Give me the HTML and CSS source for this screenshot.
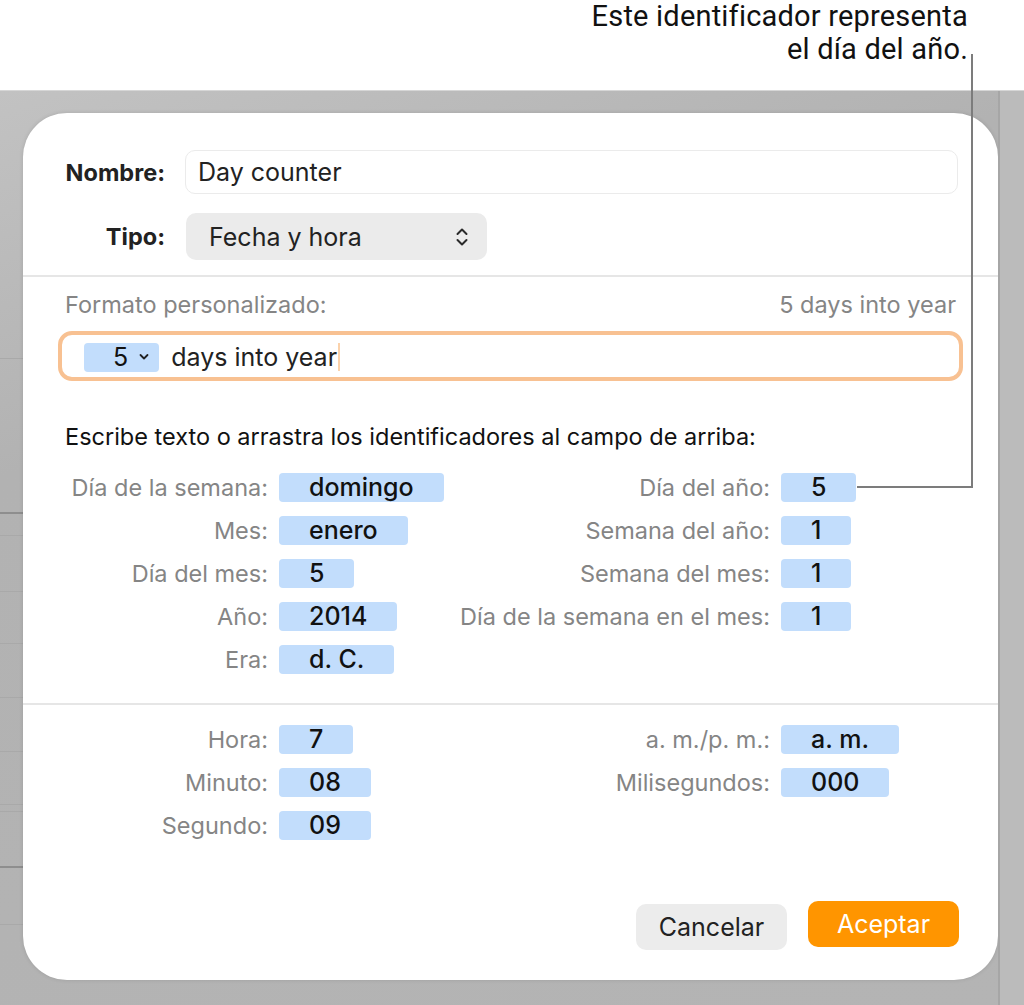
FILE: index.html
```html
<!DOCTYPE html>
<html lang="es">
<head>
    <meta charset="UTF-8">
    <meta name="viewport" content="width=device-width, initial-scale=1.0">
    <title>Formato personalizado</title>
    <link rel="stylesheet" href="styles.css">
</head>
<body>
    <!-- Callout above the window -->
    <div class="callout">
        <p>Este identificador representa</p>
        <p>el día del año.</p>
    </div>
    <div class="leader"></div>

    <div class="backdrop">
        <div class="sheet">
            <div class="sheet-row" style="height: 268px"></div>
            <div class="sheet-row dark" style="height: 155px"></div>
            <div class="sheet-row" style="height: 22px"></div>
            <div class="sheet-row" style="height: 56px"></div>
            <div class="sheet-row" style="height: 52px"></div>
            <div class="sheet-row" style="height: 54px"></div>
            <div class="sheet-row" style="height: 54px"></div>
            <div class="sheet-row" style="height: 53px"></div>
            <div class="sheet-row" style="height: 7px"></div>
            <div class="sheet-row dark" style="height: 56px"></div>
            <div class="sheet-row" style="height: 57px"></div>
        </div>

        <div class="dialog">
            <!-- Name and type -->
            <div class="head">
                <label class="head-label">Nombre:</label>
                <div class="name-field">Day counter</div>
                <label class="head-label">Tipo:</label>
                <div class="popup">
                    <span>Fecha y hora</span>
                    <svg class="updown" width="16" height="22" viewBox="0 0 16 22">
                        <path d="M3.5 8 L8 3.5 L12.5 8 M3.5 14 L8 18.5 L12.5 14" fill="none" stroke="#2a2a2a" stroke-width="2" stroke-linecap="round" stroke-linejoin="round"/>
                    </svg>
                </div>
            </div>

            <!-- Custom format -->
            <div class="format">
                <div class="format-top">
                    <span>Formato personalizado:</span>
                    <span>5 days into year</span>
                </div>
                <div class="format-field">
                    <span class="token token-menu">5
                        <svg width="12" height="8" viewBox="0 0 12 8">
                            <path d="M2.5 2 L6 5.5 L9.5 2" fill="none" stroke="#222" stroke-width="1.8" stroke-linecap="round" stroke-linejoin="round"/>
                        </svg>
                    </span>
                    <span class="format-text">days into year</span>
                    <span class="caret"></span>
                </div>
                <p class="hint">Escribe texto o arrastra los identificadores al campo de arriba:</p>

                <div class="tokens">
                    <span class="tok-label">Día de la semana:</span>
                    <span><span class="token">domingo</span></span>
                    <span class="tok-label">Día del año:</span>
                    <span><span class="token">5</span></span>

                    <span class="tok-label">Mes:</span>
                    <span><span class="token">enero</span></span>
                    <span class="tok-label">Semana del año:</span>
                    <span><span class="token">1</span></span>

                    <span class="tok-label">Día del mes:</span>
                    <span><span class="token">5</span></span>
                    <span class="tok-label">Semana del mes:</span>
                    <span><span class="token">1</span></span>

                    <span class="tok-label">Año:</span>
                    <span><span class="token">2014</span></span>
                    <span class="tok-label">Día de la semana en el mes:</span>
                    <span><span class="token">1</span></span>

                    <span class="tok-label">Era:</span>
                    <span><span class="token">d. C.</span></span>
                </div>
            </div>

            <!-- Time tokens -->
            <div class="time">
                <div class="tokens">
                    <span class="tok-label">Hora:</span>
                    <span><span class="token">7</span></span>
                    <span class="tok-label">a. m./p. m.:</span>
                    <span><span class="token">a. m.</span></span>

                    <span class="tok-label">Minuto:</span>
                    <span><span class="token">08</span></span>
                    <span class="tok-label">Milisegundos:</span>
                    <span><span class="token">000</span></span>

                    <span class="tok-label">Segundo:</span>
                    <span><span class="token">09</span></span>
                </div>
            </div>

            <div class="buttons">
                <button class="btn btn-cancel">Cancelar</button>
                <button class="btn btn-ok">Aceptar</button>
            </div>
        </div>

        <div class="side"></div>
    </div>
</body>
</html>
```

FILE: styles.css
```css
body {
    margin: 0;
    width: 1024px;
    height: 1005px;
    overflow: hidden;
    background: white;
    font-family: Inter, "Noto Sans", sans-serif;
    position: relative;
}
.callout {
    height: 90px;
    box-sizing: border-box;
    padding: 0 56px 0 0;
    text-align: right;
    font-family: Roboto, sans-serif;
    font-size: 29px;
    letter-spacing: 0.2px;
    color: #111;
}
.callout p {
    margin: 0;
    line-height: 33px;
}
.leader {
    position: absolute;
    left: 857px;
    top: 54px;
    width: 114px;
    height: 432px;
    border-right: 2px solid #7c7c7c;
    border-bottom: 2px solid #7c7c7c;
}
.backdrop {
    display: flex;
    height: 915px;
    background: linear-gradient(160deg, #c2c2c2, #b2b2b2 30%, #b4b4b4);
    border-top: 1px solid #d6d6d6;
    box-sizing: border-box;
}
.sheet {
    width: 23px;
    flex-shrink: 0;
}
.sheet-row {
    border-bottom: 1px solid #a9a9a9;
    box-sizing: border-box;
}
.sheet-row.dark {
    border-bottom: 2px solid #8e8e8e;
}
.side {
    flex: 1;
    border-left: 2px solid #a6a6a6;
    background: #bbbbbb;
}
.dialog {
    width: 975px;
    height: 867px;
    margin-top: 22px;
    flex-shrink: 0;
    background: white;
    border-radius: 44px;
    box-shadow: 0 0 4px rgba(0, 0, 0, 0.12);
    display: flex;
    flex-direction: column;
    font-size: 23.5px;
}

/* name / type */
.head {
    display: grid;
    grid-template-columns: 142px 1fr;
    column-gap: 20px;
    row-gap: 19px;
    align-items: center;
    padding: 37px 40px 15px 0;
    border-bottom: 2px solid #e6e6e6;
}
.head-label {
    text-align: right;
    font-weight: 700;
    font-size: 23.5px;
    color: #222;
}
.name-field {
    height: 44px;
    box-sizing: border-box;
    border: 1px solid #ebebeb;
    border-radius: 10px;
    padding: 0 12px;
    line-height: 42px;
    font-size: 25px;
    color: #222;
}
.popup {
    width: 301px;
    height: 47px;
    margin-left: 1px;
    box-sizing: border-box;
    background: #ebebeb;
    border-radius: 10px;
    padding: 0 17px 0 23px;
    display: flex;
    align-items: center;
    justify-content: space-between;
    font-size: 25px;
    color: #222;
}

/* custom format */
.format {
    padding: 16px 42px 0 0;
}
.format-top {
    display: flex;
    justify-content: space-between;
    padding-left: 42px;
    line-height: 24px;
    color: #858585;
}
.format-field {
    margin: 14px -7px 0 35px;
    height: 50px;
    box-sizing: border-box;
    border: 4px solid #f8c192;
    border-radius: 14px;
    padding: 2px 0 0 22px;
    display: flex;
    align-items: center;
    font-size: 25px;
    color: #222;
}
.token {
    display: inline-block;
    height: 29px;
    line-height: 29px;
    padding: 0 30px;
    background: #c2ddfc;
    border-radius: 4px;
    font-size: 25px;
    font-weight: 500;
    color: #111;
    text-align: center;
}
.token-menu {
    display: flex;
    align-items: center;
    gap: 10px;
    padding: 0 9px 0 29px;
    font-weight: 400;
}
.format-text {
    margin-left: 12px;
}
.caret {
    width: 2px;
    height: 28px;
    margin-left: 1px;
    background: #fbd2ab;
}
.hint {
    margin: 44px 0 24px 42px;
    line-height: 24px;
    color: #111;
}
.tokens {
    display: grid;
    grid-template-columns: 245px 170px 310px auto;
    column-gap: 11px;
    row-gap: 14px;
    align-items: center;
}
.tok-label {
    text-align: right;
    white-space: nowrap;
    color: #858585;
    line-height: 29px;
}

/* time */
.time {
    margin-top: 29px;
    border-top: 2px solid #e6e6e6;
    padding-top: 20px;
}

.buttons {
    margin-top: auto;
    display: flex;
    justify-content: flex-end;
    align-items: flex-start;
    gap: 21px;
    padding: 0 39px 30px 0;
}
.btn {
    font-family: Inter, sans-serif;
    font-size: 25px;
    border: none;
    border-radius: 10px;
    height: 46px;
    width: 151px;
}
.btn-cancel {
    margin-top: 3px;
    background: #ececec;
    color: #222;
}
.btn-ok {
    background: #ff9500;
    color: white;
}
```
